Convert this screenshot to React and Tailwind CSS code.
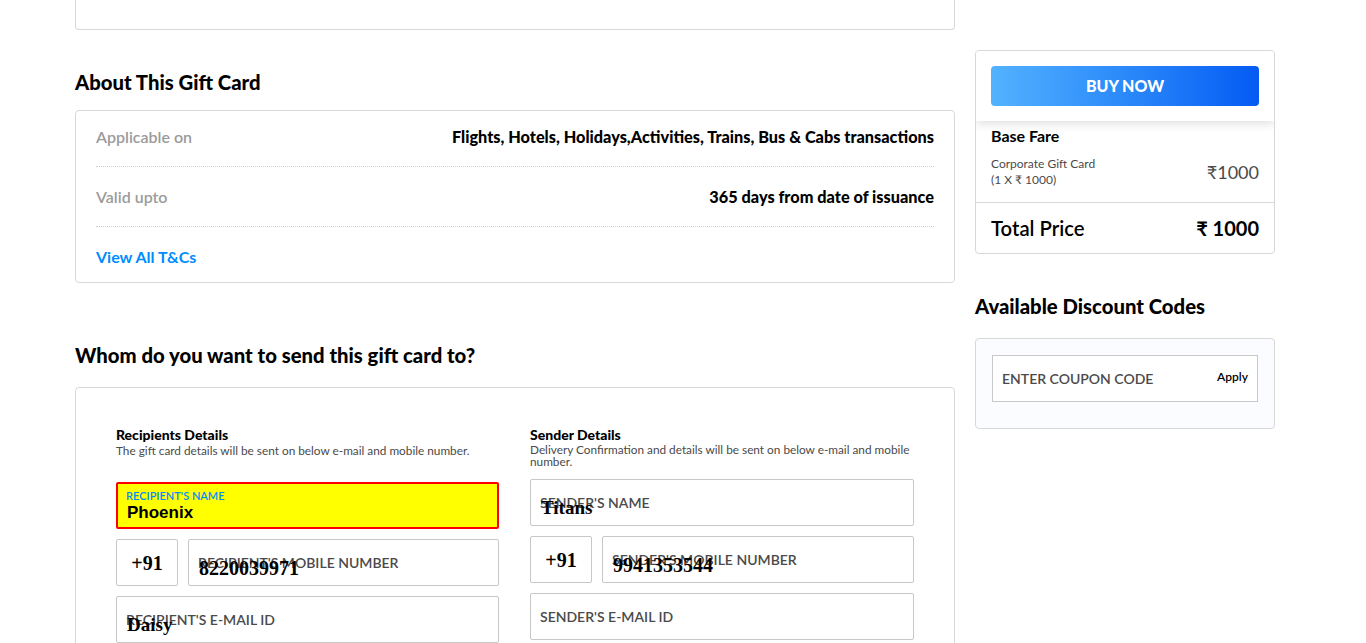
import React from 'react';

const lato = { fontFamily: 'Lato, "Open Sans", sans-serif' };

function TextField({ label, value, numeric = false, className = '' }) {
  return (
    <div className={`relative h-[47px] border border-[#c8c8c8] rounded-[2px] bg-white ${className}`}>
      <span className="absolute left-[9px] top-[12px] text-[14px] font-semibold text-[#4a4a4a] uppercase">{label}</span>
      {value && (
        <span
          className={`absolute left-[10px] top-[17px] leading-[22px] font-bold text-black font-['Liberation_Serif',serif] ${
            numeric ? 'text-[20px]' : 'text-[19px]'
          }`}
        >
          {value}
        </span>
      )}
    </div>
  );
}

function MobileRow({ label, value }) {
  return (
    <div className="flex gap-[10px]">
      <div className="w-[62px] h-[47px] border border-[#c8c8c8] rounded-[2px] flex items-center justify-center font-['Liberation_Serif',serif] font-bold text-[20px] text-black">
        +91
      </div>
      <TextField label={label} value={value} numeric className="flex-1" />
    </div>
  );
}

export default function App() {
  return (
    <div className="bg-white min-h-screen text-black" style={lato}>
      <div className="ml-[75px] w-[1200px] flex gap-[20px]">
        {/* Left column */}
        <div className="w-[880px]">
          <div className="h-[30px] border-x border-b border-[#d8d8d8] rounded-b-[4px]" />

          <h2 className="mt-[38px] text-[20.3px] font-black leading-[28px]">About This Gift Card</h2>
          <div className="mt-[14px] border border-[#d8d8d8] rounded-[4px] px-[20px] text-[16px] leading-[20px]">
            <div className="pt-[16px] pb-[19px] flex justify-between border-b border-dotted border-[#d0d0d0]">
              <span className="font-semibold text-[#9b9b9b]">Applicable on</span>
              <span className="font-black text-[16.3px]">Flights, Hotels, Holidays,Activities, Trains, Bus &amp; Cabs transactions</span>
            </div>
            <div className="pt-[20px] pb-[19px] flex justify-between border-b border-dotted border-[#d0d0d0]">
              <span className="font-semibold text-[#9b9b9b]">Valid upto</span>
              <span className="font-black text-[16.3px]">365 days from date of issuance</span>
            </div>
            <div className="pt-[20px] pb-[15px]">
              <span className="font-bold text-[#008cff]">View All T&amp;Cs</span>
            </div>
          </div>

          <h2 className="mt-[58px] text-[20.3px] font-black leading-[28px]">Whom do you want to send this gift card to?</h2>
          <div className="mt-[18px] border border-[#d8d8d8] rounded-[4px] px-[40px] pt-[38px] pb-[40px] grid grid-cols-[383px_384px] gap-[31px]">
            <div>
              <h3 className="text-[14px] font-black leading-[18px]">Recipients Details</h3>
              <p className="text-[11.8px] leading-[13px] text-[#4a4a4a]">The gift card details will be sent on below e-mail and mobile number.</p>
              <div className="mt-[25px] flex flex-col gap-[10px]">
                <div className="relative h-[47px] border-2 border-[#ff0000] rounded-[2px] bg-[#ffff00]">
                  <span className="absolute left-[8px] top-[4px] text-[11px] font-semibold text-[#008cff]">RECIPIENT'S NAME</span>
                  <span className="absolute left-[9px] top-[18px] text-[17px] leading-[22px] font-bold font-['Liberation_Sans',sans-serif]">Phoenix</span>
                </div>
                <MobileRow label="Recipient's mobile number" value="8220039971" />
                <TextField label="Recipient's e-mail id" value="Daisy" />
              </div>
            </div>
            <div>
              <h3 className="text-[14px] font-black leading-[18px]">Sender Details</h3>
              <p className="text-[11.8px] leading-[12px] text-[#4a4a4a]">Delivery Confirmation and details will be sent on below e-mail and mobile number.</p>
              <div className="mt-[11px] flex flex-col gap-[10px]">
                <TextField label="Sender's name" value="Titans" />
                <MobileRow label="Sender's mobile number" value="9941353544" />
                <TextField label="Sender's e-mail id" />
              </div>
            </div>
          </div>
        </div>

        {/* Right column */}
        <div className="w-[300px] pt-[50px]">
          <div className="border border-[#d8d8d8] rounded-[4px] overflow-hidden">
            <div className="px-[15px] py-[15px] bg-white shadow-[0_2px_10px_rgba(0,0,0,0.15)] relative">
              <button className="w-full h-[40px] rounded-[4px] bg-gradient-to-r from-[#53b2fe] to-[#065af3] text-white text-[16px] font-black">
                BUY NOW
              </button>
            </div>
            <div className="px-[15px] pt-[4px] pb-[14px] border-b border-[#d8d8d8]">
              <div className="text-[16px] font-bold leading-[22px]">Base Fare</div>
              <div className="flex items-center justify-between mt-[9px]">
                <div className="text-[12px] leading-[16px] text-[#4a4a4a]">
                  <div>Corporate Gift Card</div>
                  <div>(1 X ₹ 1000)</div>
                </div>
                <div className="text-[18px] text-[#4a4a4a]">₹1000</div>
              </div>
            </div>
            <div className="px-[15px] h-[50px] flex items-center justify-between">
              <span className="text-[20.3px] font-semibold">Total Price</span>
              <span className="text-[20px] font-bold">₹ 1000</span>
            </div>
          </div>

          <h2 className="mt-[38px] text-[20.3px] font-black leading-[28px]">Available Discount Codes</h2>
          <div className="mt-[18px] border border-[#d8d8d8] rounded-[4px] bg-[#fbfcff] px-[16px] pt-[16px] pb-[26px]">
            <div className="h-[47px] border border-[#c8c8c8] bg-white flex items-center justify-between px-[9px]">
              <span className="text-[14px] font-semibold text-[#4a4a4a]">ENTER COUPON CODE</span>
              <span className="text-[12px] font-semibold text-black -mt-[3px]">Apply</span>
            </div>
          </div>
        </div>
      </div>
    </div>
  );
}
